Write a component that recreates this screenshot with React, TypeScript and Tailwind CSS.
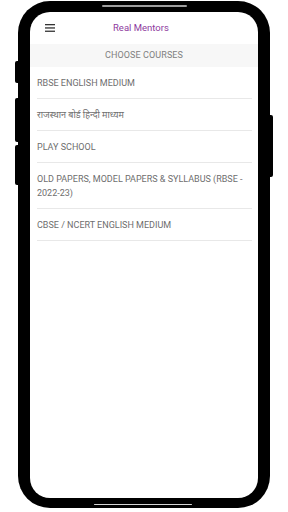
export default function App() {
  const courses = [
    "RBSE ENGLISH MEDIUM",
    "राजस्थान बोर्ड हिन्दी माध्यम",
    "PLAY SCHOOL",
    "OLD PAPERS, MODEL PAPERS & SYLLABUS (RBSE - 2022-23)",
    "CBSE / NCERT ENGLISH MEDIUM",
  ];

  return (
    <div className="w-[288px] h-[512px] bg-white overflow-hidden font-['Roboto','Noto_Sans',sans-serif]">
      <div className="relative ml-[18px] mt-[1px] w-[252px] h-[507px] rounded-[32px] bg-black p-[12px] pt-[11px] pb-[10px]">
        {/* side buttons */}
        <div className="absolute left-[-3px] top-[60px] w-[4px] h-[22px] rounded-l-[2px] bg-black" />
        <div className="absolute left-[-3px] top-[97px] w-[4px] h-[44px] rounded-l-[2px] bg-black" />
        <div className="absolute left-[-3px] top-[144px] w-[4px] h-[40px] rounded-l-[2px] bg-black" />
        <div className="absolute right-[-3px] top-[114px] w-[4px] h-[62px] rounded-r-[2px] bg-black" />
        {/* speaker + home bar */}
        <div className="absolute left-[84px] top-[4px] w-[85px] h-[2px] rounded-full bg-[#9e9e9e]" />
        <div className="absolute left-[76px] bottom-[3px] w-[98px] h-[1px] rounded-full bg-[#d6d6d6]" />

        <div className="h-full rounded-[20px] bg-white overflow-hidden">
          <div className="flex items-center h-[32px] pl-[15px]">
            <svg width="10" height="8" viewBox="0 0 10 8">
              <rect x="0" y="0" width="10" height="1.3" fill="#333" />
              <rect x="0" y="3.3" width="10" height="1.3" fill="#333" />
              <rect x="0" y="6.6" width="10" height="1.3" fill="#333" />
            </svg>
            <span className="ml-[58px] text-[9.5px] text-[#8e3a9e]">Real Mentors</span>
          </div>
          <div className="h-[23px] bg-[#f7f7f7] flex items-center justify-center text-[9px] text-[#808080] tracking-[0.1px]">
            CHOOSE COURSES
          </div>
          <ul className="px-[7px] pr-[6px]">
            {courses.map((c) => (
              <li
                key={c}
                className="border-b border-[#e8e8e8] pt-[9px] pb-[8px] text-[9px] leading-[14px] text-[#6e6e6e]"
              >
                {c}
              </li>
            ))}
          </ul>
        </div>
      </div>
    </div>
  );
}
